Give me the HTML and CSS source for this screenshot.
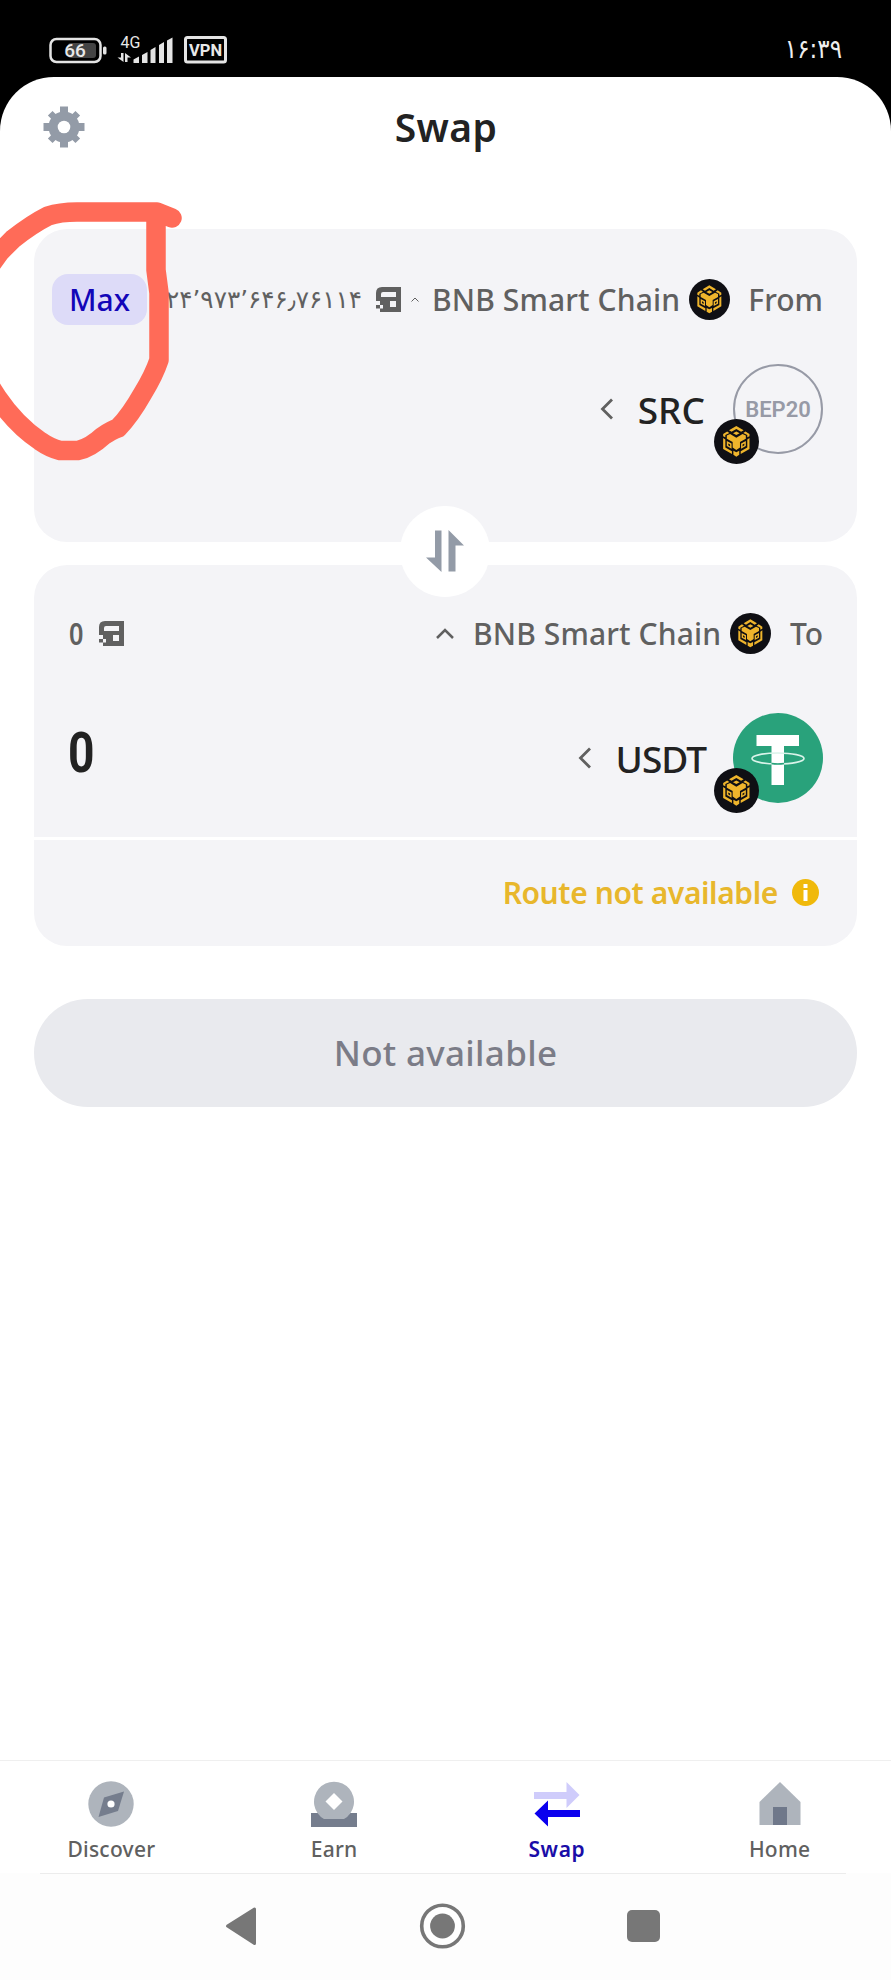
FILE: index.html
```
<!DOCTYPE html>
<html lang="en">
<head>
<meta charset="utf-8">
<title>Swap</title>
<link rel="stylesheet" href="styles.css">
</head>
<body>
<svg class="defs" width="0" height="0">
  <symbol id="bnb" viewBox="0 0 123 123">
    <circle cx="61.500" cy="61.500" r="61.500" fill="#0f0f14"/>
    <g fill="#efb52c">
      <path d="M61 19 81 31 74 35 61 27 48 35 41 31Z"/>
      <path d="M61 34 70 39 61 44 52 39Z"/>
      <path d="M25 41 36 34 42 38 31 44 31 50 25 47ZM97 41 86 34 80 38 91 44 91 50 97 47Z"/>
      <path d="M35 45 44 41 61 51 78 41 87 45 87 54 71 63 71 78 61 85 51 78 51 63 35 54Z"/>
      <path d="M25 52 31 56 31 78 49 88 49 96 25 82ZM97 52 91 56 91 78 73 88 73 96 97 82Z"/>
      <path d="M35 60 48 67 48 81 35 74ZM87 60 74 67 74 81 87 74Z"/>
      <path d="M53 87 61 91 69 87 69 98 61 103 53 98Z"/>
    </g>
    <path d="M39 67 44 70 44 75 39 72ZM83 67 78 70 78 75 83 72Z" fill="#0f0f14"/>
  </symbol>
  <symbol id="wallet" viewBox="0 0 25 25">
    <path fill="#606060" fill-rule="evenodd" d="M6 0H25V25H4V21.500H7V18H4V14H0V6Q0 0 6 0ZM7 5Q5 5 5 7V10H20V5ZM14 14V20H20V14Z"/>
    <path fill="#606060" d="M0 18H4V21.500H0Z"/>
  </symbol>
  <symbol id="back" viewBox="0 0 14 22">
    <path d="M12 1.500 2.500 11 12 20.500" fill="none" stroke="#606060" stroke-width="2.800"/>
  </symbol>
</svg>

<header class="status">
  <svg class="status-icons" width="182" height="32" viewBox="0 0 182 32">
    <rect x="1.500" y="4" width="50" height="23" rx="6" fill="none" stroke="#e4e4e4" stroke-width="2.500"/>
    <rect x="19" y="8" width="28" height="15" rx="3" fill="#444"/>
    <rect x="54" y="11.500" width="3.500" height="8" rx="1.500" fill="#e4e4e4"/>
    <text x="26" y="22" text-anchor="middle" class="battery-text">66</text>
    <text x="71.500" y="12.500" class="net-text">4G</text>
    <g fill="#e4e4e4">
      <path d="M72 18H74.500V27L68.500 22.500H72ZM76 27V18L82 22.500H78.500V27Z"/>
      <path d="M84.500 28V24.500L90 21.500V28ZM93 28V20L98.500 17V28ZM101.500 28V15L106.500 12V28ZM110 28V10L115 7V28ZM118 28V5.500L123.500 2.500V28Z"/>
    </g>
    <rect x="136.500" y="2.500" width="40" height="24.500" rx="2" fill="none" stroke="#e4e4e4" stroke-width="3"/>
    <text x="156.500" y="20.500" text-anchor="middle" class="vpn-text">VPN</text>
  </svg>
  <span class="clock">۱۶:۳۹</span>
</header>

<main class="screen">
  <div class="titlebar">
    <svg class="gear" width="42" height="42" viewBox="0 0 42 42">
      <g fill="#939ba7">
        <circle cx="21" cy="21" r="15.500"/>
        <path d="M17 .500H25V41.500H17ZM.500 17H41.500V25H.500Z"/>
        <path d="M17.700 1.500H24.300V40.500H17.700ZM1.500 17.700H40.500V24.300H1.500Z" transform="rotate(45 21 21)"/>
      </g>
      <circle cx="21" cy="21" r="6.300" fill="#fff"/>
    </svg>
    <h1 class="title">Swap</h1>
  </div>

  <section class="card card-from">
    <div class="row row-from">
      <button class="max">Max</button>
      <span class="balance-fa">۲۴’۹۷۳’۶۴۶٫۷۶۱۱۴</span>
      <svg class="wallet" width="25" height="25"><use href="#wallet"/></svg>
      <svg class="mini-caret" width="8" height="5" viewBox="0 0 8 5"><path d="M.500 4.500 4 1 7.500 4.500" fill="none" stroke="#606060"/></svg>
      <span class="chain">BNB Smart Chain</span>
      <svg class="chain-icon" width="41" height="41"><use href="#bnb"/></svg>
      <span class="side side-from">From</span>
    </div>
    <div class="token">
      <svg class="chev" width="14" height="22"><use href="#back"/></svg>
      <span class="symbol src">SRC</span>
      <div class="coin coin-bep">BEP20<svg class="badge" width="45" height="45"><use href="#bnb"/></svg></div>
    </div>
    <button class="flip">
      <svg width="38" height="42" viewBox="0 0 38 42"><path fill="#939ba7" d="M9 .500H15.500V42L0 27.500H9ZM22.500 0 38 15.500H29.500V41.500H22.500Z"/></svg>
    </button>
  </section>

  <section class="card card-to">
    <div class="row row-to">
      <span class="zero">0</span>
      <svg class="wallet-to" width="25" height="25"><use href="#wallet"/></svg>
      <svg class="caret" width="18" height="11" viewBox="0 0 18 11"><path d="M1 10 9 2 17 10" fill="none" stroke="#606060" stroke-width="2.500"/></svg>
      <span class="chain">BNB Smart Chain</span>
      <svg class="chain-icon" width="41" height="41"><use href="#bnb"/></svg>
      <span class="side side-to">To</span>
    </div>
    <div class="token token-to">
      <span class="amount">0</span>
      <svg class="chev" width="14" height="22"><use href="#back"/></svg>
      <span class="symbol usdt">USDT</span>
      <div class="coin coin-usdt">
        <svg width="90" height="90" viewBox="0 0 90 90">
          <circle cx="45" cy="45" r="45" fill="#29a27b"/>
          <path d="M23.500 22H66V33H51V72H38.500V33H23.500Z" fill="#fff"/>
          <ellipse cx="45" cy="45.500" rx="26" ry="5.500" fill="none" stroke="#d9f3e9" stroke-width="1.600"/>
          <path d="M38.500 50.500Q45 51.500 51 50.500" fill="none" stroke="#29a27b" stroke-width="1.600"/>
        </svg>
        <svg class="badge" width="45" height="45"><use href="#bnb"/></svg>
      </div>
    </div>
    <div class="notice">
      <span class="notice-text">Route not available</span>
      <svg width="27" height="27" viewBox="0 0 27 27"><circle cx="13.500" cy="13.500" r="13.500" fill="#f0b90b"/><path d="M11.500 5H15.500V9H11.500ZM11.500 11H15.500V22H11.500Z" fill="#fff"/></svg>
    </div>
  </section>

  <button class="submit">Not available</button>

  <nav class="tabs">
    <a class="tab">
      <svg width="46" height="46" viewBox="0 0 46 46"><circle cx="23" cy="23" r="22.700" fill="#aeb4bc"/><path d="M16 16.500 36 10.500 30 30 10.500 36Z" fill="#757d8d"/><circle cx="23" cy="23" r="3.600" fill="#fff"/></svg>
      <span class="tab-label">Discover</span>
    </a>
    <a class="tab">
      <svg width="46" height="46" viewBox="0 0 46 46"><path d="M0 32H46V46H0Z" fill="#757d8d"/><path d="M13 38A20 20 0 1 1 33 38Z" fill="#aeb4bc"/><path d="M23 12 31.500 20.500 23 29 14.500 20.500Z" fill="#fff"/></svg>
      <span class="tab-label">Earn</span>
    </a>
    <a class="tab active">
      <svg width="46" height="46" viewBox="0 0 46 46"><path d="M0 11H32.500V1L45.500 14 32.500 27V18H0Z" fill="#cfccfb"/><path d="M46 29H14V19.500L.500 32.500 14 45.500V36H46Z" fill="#0b00ee"/></svg>
      <span class="tab-label">Swap</span>
    </a>
    <a class="tab">
      <svg width="46" height="46" viewBox="0 0 46 46"><path d="M23 1 43.500 21V44H2.500V21Z" fill="#aeb4bc"/><path d="M16 26H30V44H16Z" fill="#6f788a"/></svg>
      <span class="tab-label">Home</span>
    </a>
  </nav>
  <footer class="sysnav">
    <svg width="436" height="46" viewBox="0 0 436 46">
      <path d="M2.500 23 29.500 6V40.500Z" fill="#777" stroke="#777" stroke-width="3" stroke-linejoin="round"/>
      <circle cx="217.500" cy="23" r="20.800" fill="#fff" stroke="#777" stroke-width="3.600"/>
      <circle cx="217.500" cy="23" r="12.400" fill="#777"/>
      <rect x="402" y="7" width="33" height="32" rx="5" fill="#777"/>
    </svg>
  </footer>
</main>

<svg class="marker" width="200" height="280" viewBox="0 190 200 280">
  <path d="M172 218 157 212H77Q60 212 48 216 32 224 13 239L0 252-20 280V370L-3 397Q16 425 40 441 50 448 60 450.500H78Q90 448 103 436 112 430 118 428 130 416 143 393 154 375 159 360V293L156 270V212"/>
</svg>
</body>
</html>
```

FILE: styles.css
```
* { box-sizing: border-box; }
body {
  margin: 0;
  width: 891px;
  height: 1980px;
  overflow: hidden;
  position: relative;
  background: #000;
  color: #222;
  font-family: "Noto Sans", sans-serif;
  font-weight: 500;
}
button { border: 0; padding: 0; font: inherit; color: inherit; }
svg { display: block; flex: none; }
span { white-space: nowrap; flex: none; }
.defs { position: absolute; }

.status {
  height: 76.5px;
  padding: 34.5px 49px 0;
  display: flex;
  justify-content: space-between;
}
.status-icons { font-family: Roboto, sans-serif; fill: #e8e8e8; overflow: visible; }
.battery-text { font-size: 19px; font-weight: 500; }
.net-text { font-size: 16px; font-weight: 400; }
.vpn-text { font-size: 16.500px; font-weight: 700; }
.clock {
  color: #eee;
  font: 400 23px/30px "DejaVu Sans", sans-serif;
  direction: ltr;
  unicode-bidi: bidi-override;
  transform: scaleY(1.15);
}

.screen {
  height: 1903.5px;
  background: #fff;
  border-radius: 54px 54px 0 0;
  display: flex;
  flex-direction: column;
}
.titlebar {
  height: 152.5px;
  padding: 29.5px 42px 0 43px;
  display: grid;
  grid-template-columns: 42px 1fr 42px;
}
.title {
  margin: 0;
  text-align: center;
  font-size: 39px;
  font-weight: 600;
  letter-spacing: .4px;
  line-height: 42px;
}

.card {
  margin: 0 34px;
  background: #f4f4f7;
  border-radius: 33px;
  position: relative;
}
.card-from { height: 313px; padding: 45px 34px 0 18px; }
.card-to { height: 380.5px; margin-top: 23px; padding-top: 44px; }
.row { display: flex; align-items: center; height: 51px; color: #606060; font-size: 30px; }
.row-to { padding: 0 34px 0 35px; height: 49px; }
.max {
  width: 95px;
  height: 51px;
  border-radius: 16px;
  background: #dddbf8;
  color: #1206b8;
  font-size: 30px;
}
.balance-fa {
  width: 195px;
  margin-left: 19px;
  font: 400 24.7px/30px "DejaVu Sans", sans-serif;
  direction: ltr;
  unicode-bidi: bidi-override;
}
.wallet { margin-left: 15px; }
.mini-caret { margin-left: 10px; }
.chain { width: 249px; margin-left: 13px; letter-spacing: .12px; }
.chain-icon { margin-left: 8px; }
.side { margin-left: auto; }
.zero { width: 30px; font-weight: 600; transform: scaleX(.84); transform-origin: left; }
.caret { margin-left: 312px; }
.row-to .chain { margin-left: 19px; }

.token { display: flex; align-items: center; justify-content: flex-end; height: 90px; margin-top: 39px; }
.symbol { font-size: 37px; margin: 0 28px 0 24px; }
.usdt { letter-spacing: -1px; margin-right: 27px; }
.coin { position: relative; width: 90px; height: 90px; }
.coin-bep {
  border: 2px solid #979aa6;
  border-radius: 50%;
  color: #979aa6;
  font: 600 22px/88px Roboto, sans-serif;
  text-align: center;
}
.badge { position: absolute; left: -19px; top: 55px; }
.coin-bep .badge { left: -21px; top: 53px; }
.token-to { margin-top: 55px; padding: 0 34px; }
.amount {
  margin-right: auto;
  font: 700 55px/90px Roboto, sans-serif;
  transform: translateY(-5px) scaleX(.84);
  transform-origin: left;
}
.notice {
  margin-top: 33.5px;
  height: 109px;
  border-top: 3px solid #fff;
  padding-right: 38px;
  display: flex;
  align-items: center;
  justify-content: flex-end;
  gap: 14px;
  color: #e8b72c;
  font-size: 30px;
  font-weight: 600;
}
.notice-text { letter-spacing: -.4px; }
.flip {
  position: absolute;
  z-index: 1;
  left: 366px;
  top: 277px;
  width: 90px;
  height: 91px;
  border-radius: 50%;
  background: #fff;
  display: grid;
  place-items: center;
}
.flip svg { transform: translateY(-1px); }
.submit {
  margin: 53px 34px 0;
  height: 108px;
  border-radius: 54px;
  background: #e9eaee;
  color: #7b7c87;
  font-size: 35px;
  letter-spacing: .3px;
}

.tabs {
  height: 113px;
  margin-top: auto;
  border-top: 1px solid #efefef;
  display: grid;
  grid-template-columns: repeat(4, 1fr);
}
.tab { display: flex; flex-direction: column; align-items: center; padding-top: 20px; color: #606060; }
.tab-label { font-size: 21px; line-height: 28px; margin-top: 8px; letter-spacing: .25px; }
.active { color: #1a0da8; }
.active .tab-label { font-weight: 600; letter-spacing: .6px; }
.sysnav {
  height: 107px;
  background: linear-gradient(#ececec, #ececec) 40px 0 / 806px 1px no-repeat #fdfdfd;
  padding: 30px 0 0 225px;
}
.marker { position: absolute; left: 0; top: 190px; z-index: 2; }
.marker path {
  fill: none;
  stroke: #ff6b58;
  stroke-width: 19.500px;
  stroke-linecap: round;
  stroke-linejoin: round;
}
```
